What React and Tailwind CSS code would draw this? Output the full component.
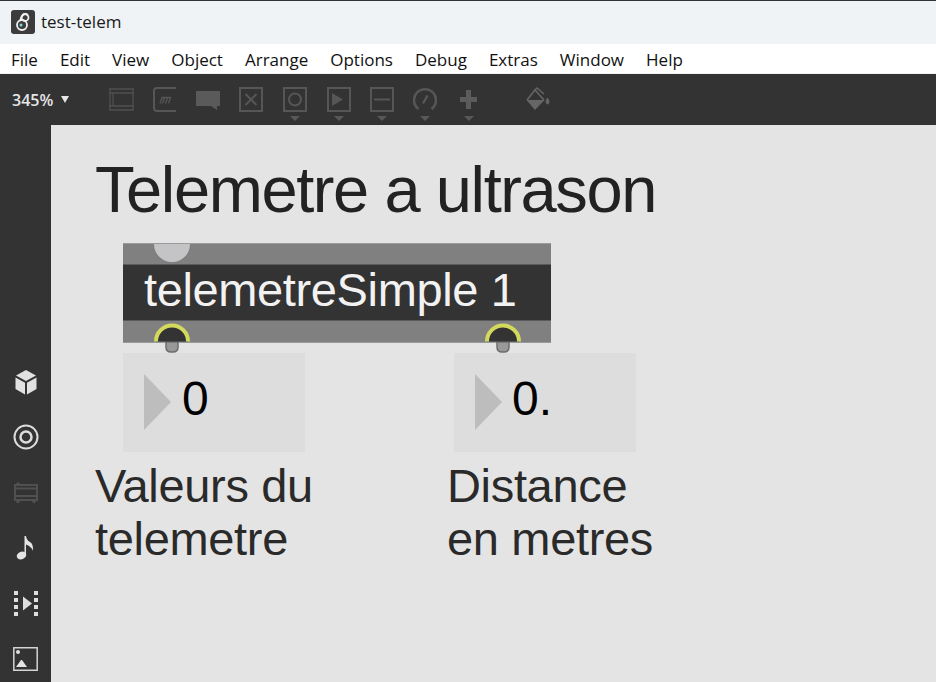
const sans = { fontFamily: '"Liberation Sans", Arial, sans-serif' };

function ToolIcon({ children, w = 24, arrow = false, className = "" }) {
  return (
    <div className={`relative shrink-0 h-[26px] ${className}`} style={{ width: w }}>
      <svg width={w} height="26" viewBox={`0 0 ${w} 26`} fill="none" stroke="#565656" strokeWidth="2">{children}</svg>
      {arrow && <div className="absolute left-1/2 -translate-x-1/2 top-[29px] w-0 h-0 border-l-[5px] border-r-[5px] border-t-[5px] border-l-transparent border-r-transparent border-t-[#585858]" />}
    </div>
  );
}

function Toolbar() {
  return (
    <div className="h-[51px] bg-[#333333] flex items-start text-[#e6e6e6] shrink-0">
      <div className="flex items-center w-[109px] h-full pl-[12px] text-[16px] font-semibold" style={{ fontFamily: '"Open Sans", sans-serif' }}>
        <span>345%</span>
        <span className="ml-[8px] w-0 h-0 border-l-[4.5px] border-r-[4.5px] border-t-[7px] border-l-transparent border-r-transparent border-t-[#e6e6e6]" />
      </div>
      <div className="flex items-start pt-[13px]">
        <ToolIcon w={25}>
          <path d="M0 2h25 M0 6h25 M0 19h25 M0 23h25 M1 2v21 M4 6v13 M24 2v21" strokeWidth="1.300" stroke="#505050" />
        </ToolIcon>
        <ToolIcon w={24} className="ml-[19px]">
          <path d="M23 1H4Q1 1 1 4v17q0 3 3 3h19" />
          <path d="M7 16.500l2-6h8.500l-2 6 M11.500 10.500l-2 6 M14.500 10.500l-2 6" strokeWidth="1.300" />
        </ToolIcon>
        <ToolIcon w={24} className="ml-[19px]">
          <path d="M0 4h24v15h-3v4l-6-4H0z" fill="#5a5a5a" stroke="none" />
        </ToolIcon>
        <ToolIcon w={24} className="ml-[19px]">
          <path d="M1 1h22v23H1z M6.500 7l11 11 M17.500 7l-11 11" />
        </ToolIcon>
        <ToolIcon arrow className="ml-[20px]">
          <path d="M1 1h22v23H1z" />
          <circle cx="12" cy="12.500" r="6" />
        </ToolIcon>
        <ToolIcon arrow className="ml-[20px]">
          <path d="M1 1h22v23H1z" />
          <path d="M5 6l11 6.500L5 19z" fill="#565656" stroke="none" />
        </ToolIcon>
        <ToolIcon arrow className="ml-[19px]">
          <path d="M1 1h22v23H1z M4 12.500h16" />
        </ToolIcon>
        <ToolIcon arrow className="ml-[19px]">
          <path d="M5.500 22a11 11 0 1 1 13 0 M10 16.500l4.500-8" strokeWidth="2.500" />
        </ToolIcon>
        <ToolIcon w={17} arrow className="ml-[23px]">
          <path d="M8.500 3v19 M0 12.500h17" strokeWidth="5" stroke="#5c5c5c" />
        </ToolIcon>
        <ToolIcon w={25} className="ml-[49px]">
          <path d="M1 13L9 3l9 10" strokeWidth="1.500" stroke="#666" />
          <path d="M0.500 13h18L9 23z" fill="#666" stroke="none" />
          <path d="M8 4l3-3 7 6" strokeWidth="1.500" stroke="#666" />
          <path d="M21.500 11q-3 5 0 6q3-1 0-6z" fill="#666" stroke="#666" strokeWidth="1" />
        </ToolIcon>
      </div>
    </div>
  );
}

function Slot({ children }) {
  return <div className="h-[26px] flex items-center justify-center">{children}</div>;
}

function Sidebar() {
  return (
    <div className="w-[51px] shrink-0 bg-[#333333] flex flex-col items-center pt-[244px] gap-[29.4px]">
      <Slot>
        <svg width="22" height="25" viewBox="0 0 22 25" fill="#e2e2e2">
          <path d="M11 0l10 5.500-10 5.500L1 5.500z" />
          <path d="M0.500 7.500l9.500 5.300v11.700l-9.500-5.500z M21.500 7.500L12 12.800v11.700l9.500-5.500z" />
        </svg>
      </Slot>
      <Slot>
        <svg width="26" height="26" viewBox="0 0 26 26" fill="none" stroke="#dcdcdc" strokeWidth="2">
          <circle cx="13" cy="13" r="11.500" />
          <circle cx="13" cy="13" r="5.500" strokeWidth="2.500" />
        </svg>
      </Slot>
      <Slot>
        <svg width="26" height="22" viewBox="0 0 26 22" fill="none" stroke="#505050" strokeWidth="2">
          <path d="M2 3h22v15H2z M2 6.500h22 M2 14h22" />
          <circle cx="5" cy="2" r="1.800" fill="#505050" stroke="none" />
          <circle cx="5" cy="19.500" r="1.800" fill="#505050" stroke="none" />
          <circle cx="21" cy="19.500" r="1.800" fill="#505050" stroke="none" />
        </svg>
      </Slot>
      <Slot>
        <svg width="20" height="26" viewBox="0 0 20 26" fill="#e4e4e4">
          <ellipse cx="5.500" cy="20.500" rx="4.800" ry="3.800" transform="rotate(-20 5.500 20.500)" />
          <path d="M8.500 1H10q.5 4 4 6t3 9q-1-4-7-6.500V20H8.500z" />
        </svg>
      </Slot>
      <Slot>
        <svg width="24" height="25" viewBox="0 0 24 25" fill="#dedede">
          <path d="M0 0h4v4H0z M0 7h4v4H0z M0 14h4v4H0z M0 21h4v4H0z M20 0h4v4h-4z M20 7h4v4h-4z M20 14h4v4h-4z M20 21h4v4h-4z" />
          <path d="M9 5.500l9 7-9 7z" />
        </svg>
      </Slot>
      <Slot>
        <svg width="25" height="24" viewBox="0 0 25 24" fill="none">
          <path d="M0.800 0.800h23.400v22.400H0.800z" stroke="#d4d4d4" strokeWidth="1.500" />
          <circle cx="5" cy="5" r="2" fill="#e0e0e0" />
          <path d="M3 20l5-7h1l5 7z" fill="#e4e4e4" />
        </svg>
      </Slot>
    </div>
  );
}

function NumberBox({ left, value, textClass }) {
  return (
    <div className="absolute top-[228px] w-[182px] h-[99px] bg-[#dddddd]" style={{ left }}>
      <div className="absolute left-[21px] top-[21px] w-0 h-0 border-t-[28px] border-b-[28px] border-l-[27px] border-t-transparent border-b-transparent border-l-[#bdbdbd]" />
      <span className={`absolute top-[14px] text-[48px] leading-[64px] text-black ${textClass}`} style={sans}>{value}</span>
    </div>
  );
}

function Outlet({ left }) {
  return (
    <div className="absolute top-[197px]" style={{ left }}>
      <svg width="38" height="31" viewBox="0 0 38 31" className="block">
        <path d="M13 20v5q0 5 5 5h2q5 0 5-5v-5z" fill="#999999" stroke="#6c6c6c" strokeWidth="1.500" />
        <path d="M3 19.500a16 16 0 0 1 32 0z" fill="#333333" />
        <path d="M3 19.500a16 16 0 0 1 32 0" fill="none" stroke="#d3d95c" strokeWidth="4" />
      </svg>
    </div>
  );
}

function Canvas() {
  return (
    <div className="relative flex-1 bg-[#e4e4e4] overflow-hidden" style={sans}>
      <div className="absolute left-[44px] top-[25px] text-[65px] tracking-[-1.400px] leading-[80px] whitespace-nowrap text-[#222222]">Telemetre a ultrason</div>
      <div className="absolute left-[72px] top-[118px] w-[428px] h-[100px] bg-[#808080] border-y border-[#9a9a9a] overflow-hidden">
        <div className="absolute left-[31px] -top-[18px] w-[36px] h-[36px] rounded-full bg-[#c4c4c6]" />
        <div className="absolute left-0 right-0 top-[20px] h-[57px] bg-[#333333] border-y border-[#5a5a5a] pl-[21px] text-[47px] tracking-[-0.370px] leading-[50px] text-[#f2f2f2] whitespace-nowrap">telemetreSimple 1</div>
      </div>
      <Outlet left={102} />
      <Outlet left={433} />
      <NumberBox left={72} value="0" textClass="left-[59px]" />
      <NumberBox left={403} value="0." textClass="left-[58px]" />
      <div className="absolute left-[44px] top-[334px] text-[47px] tracking-[-0.330px] leading-[53px] text-[#2a2a2a]">Valeurs du<br />telemetre</div>
      <div className="absolute left-[396px] top-[334px] text-[47px] tracking-[-0.330px] leading-[53px] text-[#2a2a2a]">Distance<br />en metres</div>
    </div>
  );
}

export default function App() {
  return (
    <div className="w-[936px] h-[682px] overflow-hidden flex flex-col bg-white" style={{ fontFamily: '"Open Sans", sans-serif' }}>
      <div className="h-[44px] shrink-0 bg-[#eff3f5] border-t border-[#333] flex items-center pl-[11px] pb-[2px] gap-[6px]">
        <div className="w-[24px] h-[24px] rounded-[3px] bg-[#3c3c3c] flex items-center justify-center">
          <svg width="16" height="20" viewBox="0 0 16 20" fill="none" stroke="#f0f0f0" strokeWidth="1.800">
            <path d="M13 3Q10 1 8 3T5 9" />
            <circle cx="10" cy="5.500" r="3.500" />
            <circle cx="7" cy="13" r="5" />
            <circle cx="6" cy="13" r="1.500" fill="#7fd6df" stroke="none" />
          </svg>
        </div>
        <span className="text-[17px] text-[#1a1a1a]">test-telem</span>
      </div>
      <div className="h-[29px] shrink-0 bg-white flex items-center pl-[11px] pt-[3px] gap-[22px] text-[17px] text-[#111]">
        {["File", "Edit", "View", "Object", "Arrange", "Options", "Debug", "Extras", "Window", "Help"].map((m) => (
          <span key={m}>{m}</span>
        ))}
      </div>
      <div className="h-[1px] shrink-0 bg-[#f2f2f2]" />
      <Toolbar />
      <div className="flex flex-1 min-h-0">
        <Sidebar />
        <Canvas />
      </div>
    </div>
  );
}
